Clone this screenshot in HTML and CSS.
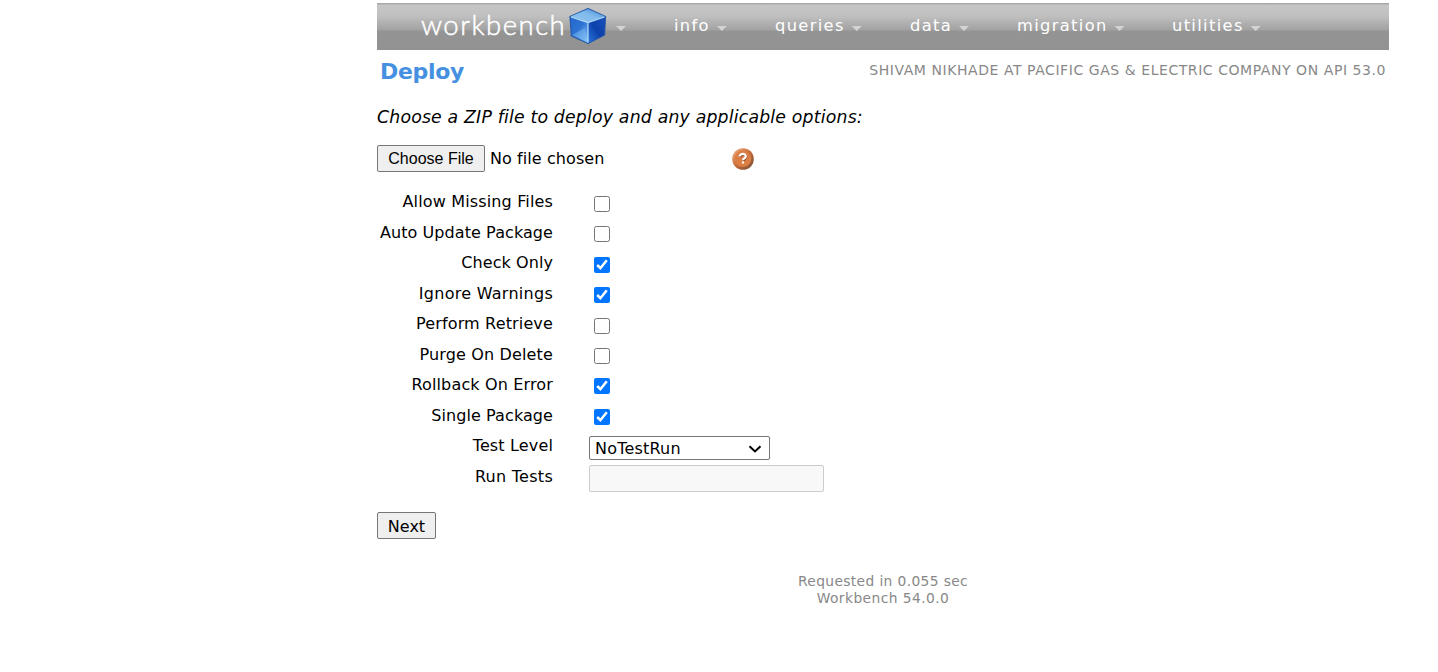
FILE: index.html
```html
<!DOCTYPE html>
<html lang="en">
<head>
<meta charset="utf-8">
<title>Workbench - Deploy</title>
<link rel="stylesheet" href="styles.css">
</head>
<body>
<div class="page">
  <nav class="nav">
    <a class="logo"><span class="logo-text">workbench</span>
      <svg class="cube" viewBox="0 0 40 38" width="40" height="38">
        <defs>
          <linearGradient id="top" x1="0" y1="1" x2="1" y2="0"><stop offset="0" stop-color="#8fc3ee"/><stop offset=".55" stop-color="#80bbec"/><stop offset="1" stop-color="#3f86d2"/></linearGradient>
          <linearGradient id="left" x1="0" y1="0" x2=".8" y2="1"><stop offset="0" stop-color="#2468cf"/><stop offset=".5" stop-color="#2e73d3"/><stop offset="1" stop-color="#77b7f1"/></linearGradient>
          <linearGradient id="right" x1="0" y1="1" x2="1" y2="0"><stop offset="0" stop-color="#2b76d8"/><stop offset=".5" stop-color="#0c41ac"/><stop offset="1" stop-color="#1a50ba"/></linearGradient>
        </defs>
        <path d="M21 1.500 38.500 9.500 37.500 28 21 36.500 4.500 29 3 9.500Z" fill="#1747a3" stroke="#285ba8" stroke-width="1.300" stroke-linejoin="round"/>
        <path d="M21 2 38 9.500 21 15.500 3.500 9.500Z" fill="url(#top)"/>
        <path d="M3.500 10 21 15.500V36L5 28.500Z" fill="url(#left)"/>
        <path d="M38 10 21 15.500V36L37 28Z" fill="url(#right)"/>
        <path d="M5 28 18 21 20.500 35Z" fill="#8ec8f7" opacity=".4"/>
        <path d="M4 10 21 15.500 37.500 10M21 15.500V35.500" fill="none" stroke="#b5dcfb" stroke-width="1.200"/>
      </svg>
      <i class="caret"></i></a>
    <a class="item info"><span>info</span><i class="caret"></i></a>
    <a class="item queries"><span>queries</span><i class="caret"></i></a>
    <a class="item data"><span>data</span><i class="caret"></i></a>
    <a class="item migration"><span>migration</span><i class="caret"></i></a>
    <a class="item utilities"><span>utilities</span><i class="caret"></i></a>
  </nav>
  <header class="heading">
    <h1>Deploy</h1>
    <div class="user">SHIVAM NIKHADE AT PACIFIC GAS &amp; ELECTRIC COMPANY ON API 53.0</div>
  </header>
  <p class="intro">Choose a ZIP file to deploy and any applicable options:</p>
  <form>
    <div class="file-row">
      <input class="file" type="file">
      <svg class="help" viewBox="0 0 22 22" width="22" height="22">
        <defs>
          <linearGradient id="rim" x1="0" y1="0" x2="1" y2="1"><stop offset="0" stop-color="#f3b38a"/><stop offset=".5" stop-color="#c46b38"/><stop offset="1" stop-color="#6f4b38"/></linearGradient>
        </defs>
        <circle cx="11" cy="11" r="10.800" fill="url(#rim)"/>
        <circle cx="11" cy="10.800" r="8.300" fill="#dc7d43"/>
        <path d="M8.300 9.300C8.300 5.800 14.700 6 14.400 9.200 14.200 11 11.800 11.200 11.600 13" fill="none" stroke="#8d4d29" stroke-width="2.200"/>
        <path d="M7.600 8.600C7.600 5 14.200 5.200 13.800 8.500 13.600 10.400 11 10.500 11 12.200M11 13.400V15.600" fill="none" stroke="#fff" stroke-width="2.200"/>
      </svg>
    </div>
    <div class="options">
      <label class="wide">Allow Missing Files</label><input type="checkbox">
      <label class="even">Auto Update Package</label><input type="checkbox">
      <label>Check Only</label><input type="checkbox" checked>
      <label class="even wider">Ignore Warnings</label><input type="checkbox" checked>
      <label class="wide">Perform Retrieve</label><input type="checkbox">
      <label class="even wide">Purge On Delete</label><input type="checkbox">
      <label class="wide">Rollback On Error</label><input class="rollback" type="checkbox" checked>
      <label class="even">Single Package</label><input type="checkbox" checked>
      <label class="wide">Test Level</label>
      <div class="select">
        <select class="level"><option>NoTestRun</option></select>
        <svg class="chevron" viewBox="0 0 14 8" width="14" height="8"><path d="M1.500 1.200 7 6.400 12.500 1.200" fill="none" stroke="#000" stroke-width="2"/></svg>
      </div>
      <label class="even wider">Run Tests</label><input class="tests" type="text" disabled>
    </div>
    <button class="next" type="button">Next</button>
  </form>
  <footer class="footer"><div>Requested in 0.055 sec</div><div class="version">Workbench 54.0.0</div></footer>
</div>
</body>
</html>
```
FILE: styles.css
```css
* { box-sizing: border-box; }
body { margin: 0; background: #fff; color: #000; font-family: Verdana, "DejaVu Sans", sans-serif; font-size: 16px; }
.page { width: 1012px; margin-left: 377px; padding-top: 3px; }
.nav {
  display: flex; height: 47px; padding-left: 44px; color: #fff;
  background: linear-gradient(#a9a9a9 0 1px, #c6c6c6 2px, #c0c0c0 13px, #b0b0b0 20px, #a2a2a2 27px, #949494 28px, #929292 47px);
}
.logo { display: flex; width: 253px; }
.logo-text { width: 146px; font: 300 27.500px/44px Lato, sans-serif; letter-spacing: 1.5px; white-space: nowrap; -webkit-text-stroke: 0.5px #fff; }
.cube { margin-top: 4px; }
.caret { width: 10px; height: 5px; margin-top: 23px; background: #d3d3d3; clip-path: polygon(0 0, 100% 0, 50% 100%); }
.logo .caret { margin-left: 9px; }
.item { display: flex; font-size: 16.25px; line-height: 45px; letter-spacing: 1.35px; }
.item span { white-space: nowrap; }
.item .caret { margin-left: 7px; }
.info { width: 101px; }
.queries { width: 135px; }
.data { width: 107px; }
.migration { width: 155px; }
.heading { display: flex; justify-content: space-between; height: 54px; padding: 0 3px; }
h1 { margin: 0; color: #4590e0; font-size: 22px; line-height: 44px; letter-spacing: -0.3px; white-space: nowrap; }
.user { color: #888; font-size: 14px; line-height: 41px; letter-spacing: 0.56px; white-space: nowrap; }
.intro { margin: 0; height: 41px; font-size: 17.300px; font-style: italic; line-height: 27px; letter-spacing: 0.19px; white-space: nowrap; }
.file-row { display: flex; height: 41px; }
.file { width: 355px; height: 27px; font-family: inherit; font-size: 16px; letter-spacing: 0.08px; }
.file::file-selector-button { width: 108px; height: 27px; margin: 0 5px 0 0; padding: 0; font: 16px "Liberation Sans", sans-serif; border: 1px solid #767676; border-radius: 2px; background: #efefef; color: #000; }
.help { margin-top: 3px; }
.options { display: grid; grid-template-columns: 176px auto; grid-auto-rows: 30.450px; column-gap: 36px; justify-content: start; height: 326px; }
label { justify-self: end; line-height: 31px; letter-spacing: 0.08px; white-space: nowrap; }
.wide { letter-spacing: 0.15px; }
.wider { letter-spacing: 0.27px; }
.even { padding-top: 1px; }
input[type="checkbox"] { width: 16px; height: 16px; margin: 10px 5px; }
input.rollback { margin-top: 9px; }
.select { position: relative; width: 181px; height: 24px; margin-top: 6px; }
.level { display: block; width: 100%; height: 24px; padding: 2px 5px 0; font: 16px Verdana, "DejaVu Sans", sans-serif; letter-spacing: 0.2px; color: #000; background: #fff; border: 1px solid #767676; border-radius: 2px; appearance: none; }
.chevron { position: absolute; right: 8px; top: 9px; pointer-events: none; }
.tests { width: 235px; height: 27px; margin-top: 5px; border: 1px solid #ccc; border-radius: 2px; background: #f8f8f8; }
.next { display: block; width: 59px; height: 27px; padding: 1px 0 0; font: 16px Verdana, "DejaVu Sans", sans-serif; background: #efefef; border: 1px solid #767676; border-radius: 2px; }
.footer { margin-top: 34px; color: #888; font-size: 13.800px; line-height: 17px; letter-spacing: 0.38px; text-align: center; }
.version { letter-spacing: 0.44px; }
```
